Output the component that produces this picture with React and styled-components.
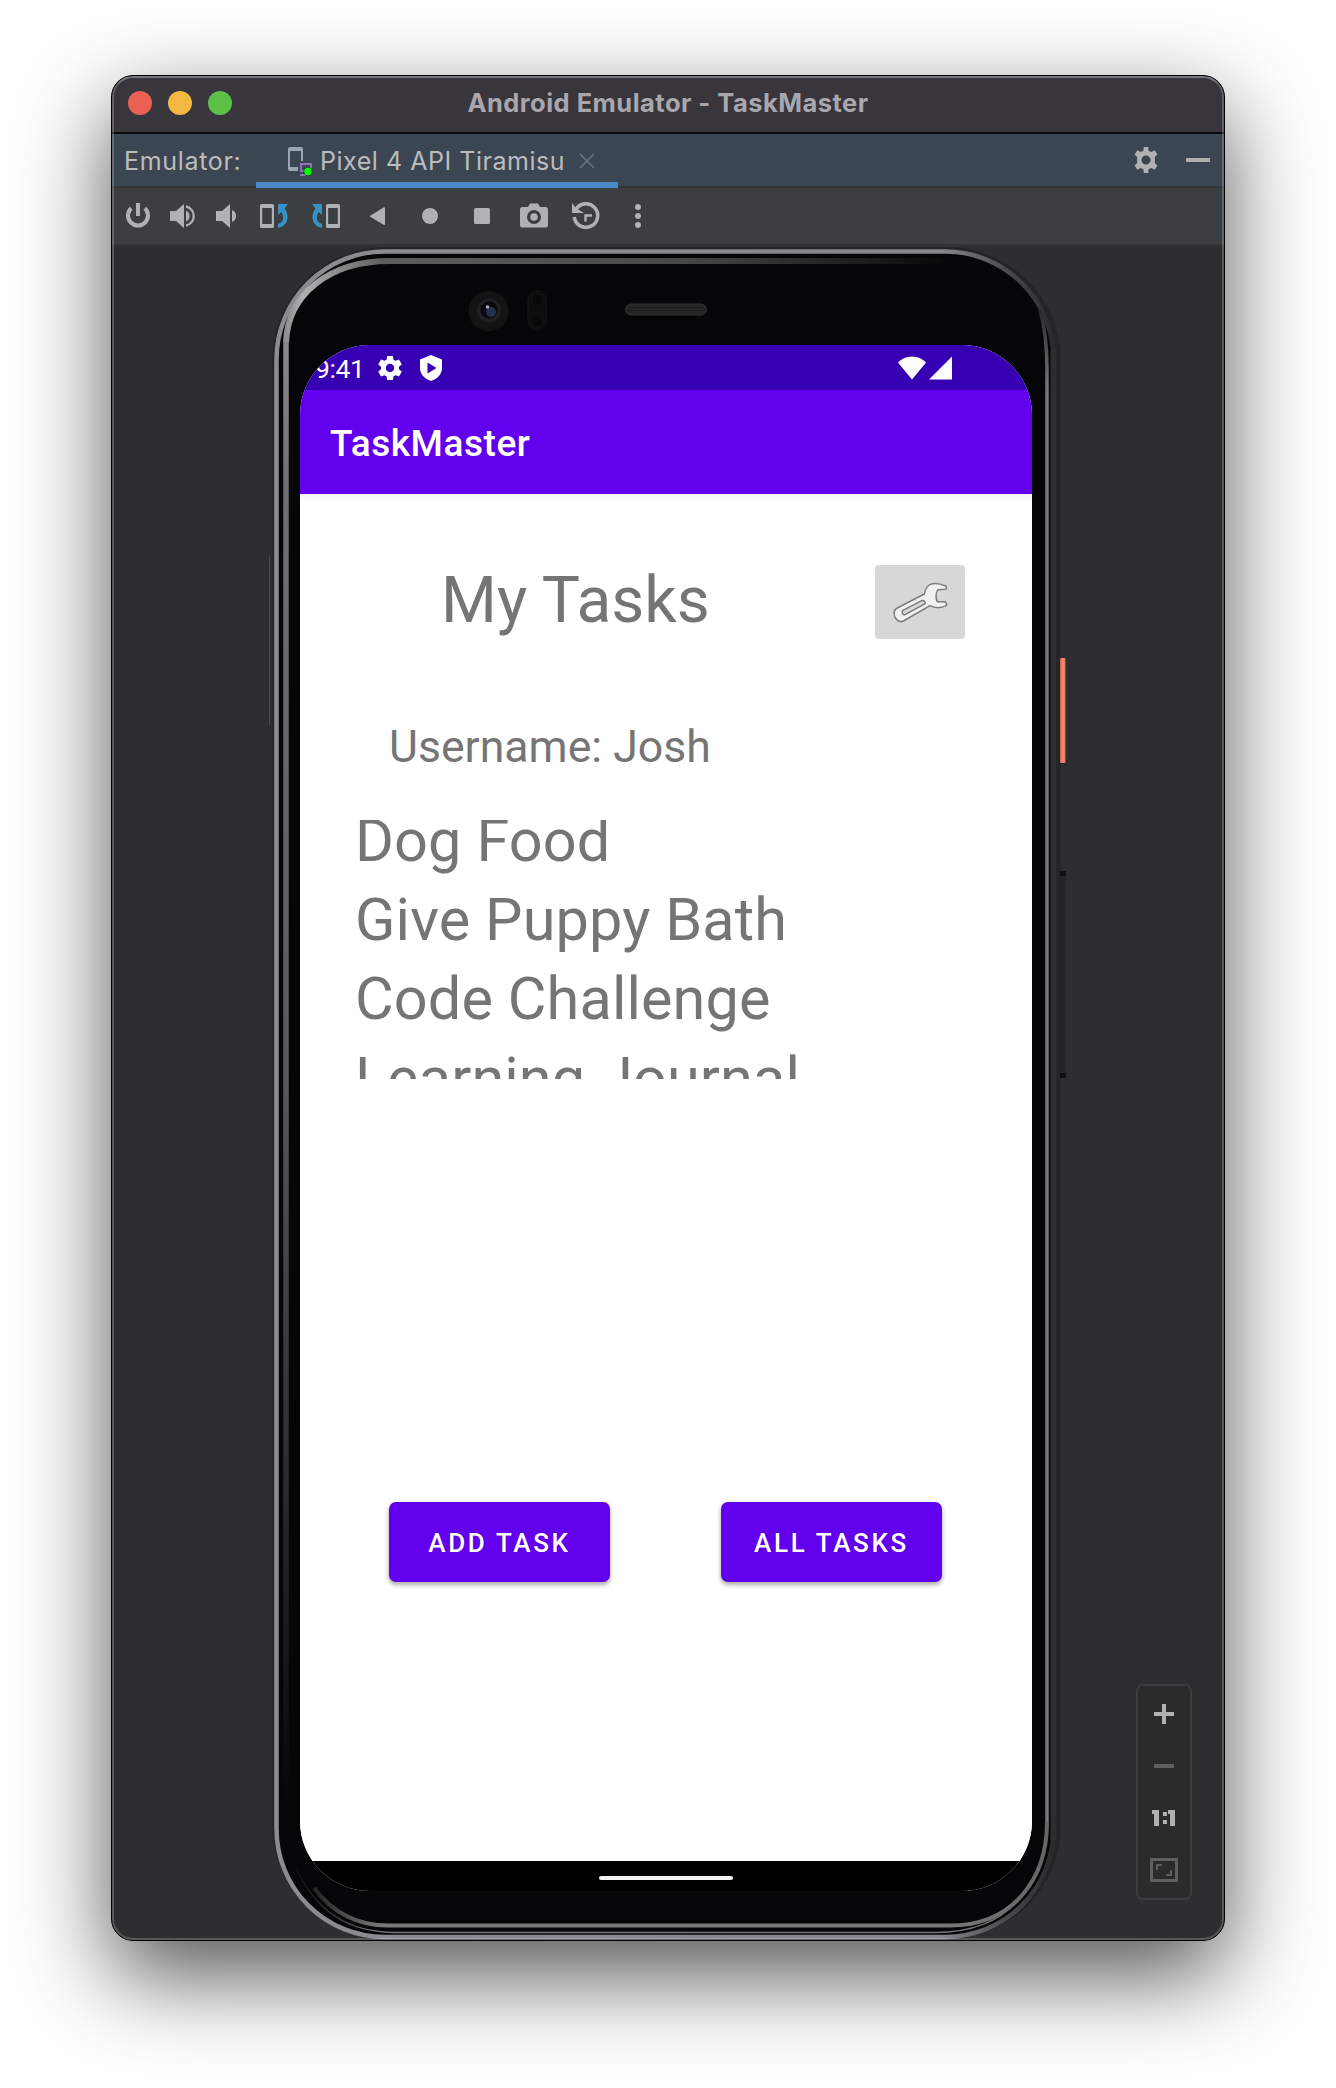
import React from "react";
import styled, { createGlobalStyle } from "styled-components";

const GlobalStyle = createGlobalStyle`
  *, *::before, *::after { box-sizing: border-box; }
  body { margin: 0; background: #fff; }
  button { font: inherit; border: 0; padding: 0; background: none; }
`;

const Desktop = styled.main`
  height: 2088px;
  padding: 75px 111px 0;
  overflow: hidden;
  background: #fff;
`;

const Window = styled.section`
  position: relative;
  display: flex;
  flex-direction: column;
  width: 1114px;
  height: 1866px;
  border: 1px solid #000;
  border-radius: 22px;
  overflow: hidden;
  background: #2d2e30;
  font-family: Inter, "Liberation Sans", sans-serif;
  &::after {
    content: "";
    position: absolute;
    inset: 0;
    border-radius: 21px;
    border: 2px solid rgba(255, 255, 255, 0.2);
    border-top-color: rgba(255, 255, 255, 0.32);
    pointer-events: none;
  }
`;

const WindowShadow = styled.div`
  width: 1114px;
  border-radius: 22px;
  box-shadow: 0 34px 92px rgba(0, 0, 0, 0.68);
`;

const TitleBar = styled.header`
  flex: none;
  display: grid;
  grid-template-columns: 1fr auto 1fr;
  align-items: center;
  height: 58px;
  padding: 0 16px 2px;
  background: #38363c;
  border-bottom: 2px solid #0c0c0e;
`;

const Lights = styled.div`
  display: flex;
  gap: 16px;
`;

const Light = styled.span`
  width: 24px;
  height: 24px;
  border-radius: 50%;
  background: ${(p) => p.$color};
`;

const Title = styled.h1`
  margin: 0;
  font-size: 25.5px;
  line-height: 32px;
  font-weight: 700;
  letter-spacing: 0.47px;
  color: #a9a7ad;
`;

const TabBar = styled.div`
  flex: none;
  display: flex;
  align-items: stretch;
  height: 54px;
  background: #3c4653;
  box-shadow: inset 0 -2px #353537;
  font-size: 25px;
  line-height: 54px;
  color: #bcbcbc;
`;

const TabLabel = styled.span`
  width: 144px;
  padding-left: 12px;
  letter-spacing: 0.68px;
`;

const Tab = styled.div`
  display: flex;
  align-items: center;
  width: 362px;
  padding-left: 30px;
  box-shadow: inset 0 -6px #4a88c7;
  svg { flex: none; }
`;

const TabName = styled.span`
  flex: none;
  margin-left: 8px;
  width: 259px;
  white-space: nowrap;
  letter-spacing: 0.53px;
`;

const TabActions = styled.div`
  display: flex;
  align-items: center;
  gap: 26px;
  margin-left: auto;
  padding: 0 13px 2px 0;
`;

const Toolbar = styled.div`
  flex: none;
  display: flex;
  height: 58px;
  padding-left: 3px;
  background: #3c3f41;
  border-bottom: 2px solid #343434;
`;

const ToolButton = styled.button`
  display: flex;
  align-items: center;
  justify-content: center;
  width: ${(p) => p.$width || 52}px;
`;

const Canvas = styled.div`
  flex: 1;
  display: flex;
  align-items: flex-end;
  justify-content: space-between;
  padding-right: 32px;
`;

const Device = styled.div`
  position: relative;
  align-self: stretch;
  width: 804px;
  margin-left: 150px;
  padding: 99px 0 0 38px;
`;

const Bezel = styled.svg`
  position: absolute;
  left: 0;
  top: 0;
`;

const Screen = styled.div`
  position: relative;
  display: flex;
  flex-direction: column;
  width: 732px;
  height: 1546px;
  border-radius: 70px;
  overflow: hidden;
  background: #fff;
  font-family: Roboto, sans-serif;
`;

const StatusBar = styled.div`
  flex: none;
  display: flex;
  align-items: center;
  height: 45px;
  padding: 0 80px 0 15px;
  background: #3700b3;
  color: #fff;
  font-size: 26.5px;
`;

const Clock = styled.span`
  width: 63px;
  padding-top: 2px;
  letter-spacing: -0.4px;
`;

const StatusIcons = styled.div`
  display: flex;
  align-items: center;
  gap: ${(p) => p.$gap}px;
  margin-left: ${(p) => p.$push || 0};
`;

const AppBar = styled.div`
  flex: none;
  display: flex;
  align-items: center;
  height: 104px;
  padding: 3px 0 0 30px;
  background: #6200ee;
  color: #fff;
  font-size: 37px;
  font-weight: 500;
  letter-spacing: 0.55px;
`;

const Content = styled.div`
  flex: 1;
  display: flex;
  flex-direction: column;
  padding: 71px 0 0;
  color: #757575;
  background: linear-gradient(#f4f4f4, #fff 8px);
`;

const Heading = styled.div`
  display: flex;
  justify-content: space-between;
  height: 74px;
  padding: 0 67px 0 141px;
`;

const PageTitle = styled.h2`
  margin: -2px 0 0;
  font-size: 64px;
  line-height: 75px;
  font-weight: 400;
`;

const SettingsButton = styled.button`
  width: 90px;
  height: 74px;
  border-radius: 4px;
  background: #d6d7d6;
  svg { display: block; }
`;

const Username = styled.p`
  margin: 82px 0 0 89px;
  font-size: 44.6px;
  line-height: 52px;
`;

const TaskList = styled.ul`
  display: flex;
  flex-direction: column;
  height: 259px;
  margin: 47px 0 0;
  padding: 0 0 0 55px;
  overflow: hidden;
  list-style: none;
`;

const Task = styled.li`
  flex: none;
  height: 79.4px;
  font-size: 59.4px;
  line-height: 79.4px;
  letter-spacing: 0.12px;
  white-space: nowrap;
  &:first-child { margin-top: -18.4px; }
`;

const Actions = styled.div`
  display: flex;
  justify-content: space-between;
  margin-top: 423px;
  padding: 0 90px 0 89px;
`;

const ActionButton = styled.button`
  width: 221px;
  height: 80px;
  padding-top: 2px;
  border-radius: 7px;
  background: #6200ee;
  color: #fff;
  font-size: 26px;
  font-weight: 500;
  letter-spacing: 2.65px;
  box-shadow: 0 3px 4px rgba(0, 0, 0, 0.28), 0 1px 6px rgba(0, 0, 0, 0.1);
`;

const NavBar = styled.div`
  flex: none;
  display: flex;
  justify-content: center;
  align-items: center;
  height: 30px;
  background: #000;
`;

const Handle = styled.span`
  width: 134px;
  height: 4px;
  margin-top: 3px;
  border-radius: 2px;
  background: #f2f2f2;
`;

const ZoomPanel = styled.div`
  display: flex;
  flex-direction: column;
  align-items: center;
  width: 56px;
  height: 216px;
  margin-bottom: 40px;
  padding-top: 2px;
  border: 2px solid #3d3d3f;
  border-radius: 7px;
  background: #2b2b2b;
`;

const ZoomButton = styled.button`
  display: flex;
  align-items: center;
  justify-content: center;
  width: 52px;
  height: 52px;
`;

const GEAR =
  "M19.43 12.98c.04-.32.07-.64.07-.98s-.03-.66-.07-.98l2.11-1.65c.19-.15.24-.42.12-.64l-2-3.46c-.12-.22-.39-.3-.61-.22l-2.49 1c-.52-.4-1.08-.73-1.69-.98l-.38-2.65C14.46 2.18 14.25 2 14 2h-4c-.25 0-.46.18-.49.42l-.38 2.65c-.61.25-1.17.59-1.69.98l-2.49-1c-.23-.09-.49 0-.61.22l-2 3.46c-.13.22-.07.49.12.64l2.11 1.65c-.04.32-.07.65-.07.98s.03.66.07.98l-2.11 1.65c-.19.15-.24.42-.12.64l2 3.46c.12.22.39.3.61.22l2.49-1c.52.4 1.08.73 1.69.98l.38 2.65c.03.24.24.42.49.42h4c.25 0 .46-.18.49-.42l.38-2.65c.61-.25 1.17-.59 1.69-.98l2.49 1c.23.09.49 0 .61-.22l2-3.46c.12-.22.07-.49-.12-.64l-2.11-1.65zM12 15.5c-1.93 0-3.5-1.57-3.5-3.5s1.57-3.5 3.5-3.5 3.5 1.57 3.5 3.5-1.57 3.5-3.5 3.5z";

const Icon = ({ w, h, children, ...rest }) => (
  <svg width={w} height={h} viewBox={`0 0 ${w} ${h}`} fill="#afb1b3" {...rest}>
    {children}
  </svg>
);

const Gear = ({ size, color }) => (
  <svg width={size} height={size} viewBox="2 2 20 20" fill={color}>
    <path d={GEAR} />
  </svg>
);

const TabGear = () => (
  <Icon w={26} h={26}>
    <path
      fillRule="evenodd"
      d="M10.6 0h4.8v3.6l2.8 1.4 3.5-1.7 2.7 4.2-2.5 2.3v6.4l2.5 2.3-2.7 4.2-3.5-1.7-2.8 1.4V26h-4.8v-3.6L7.8 21l-3.5 1.7-2.7-4.2 2.5-2.3V9.800L1.600 7.500l2.700-4.200L7.800 5l2.800-1.400zM13 8.500a4.500 4.500 0 1 0 0 9 4.500 4.500 0 0 0 0-9z"
    />
  </Icon>
);

const DeviceIcon = () => (
  <svg width="26" height="30" viewBox="0 0 26 30">
    <path d="M4 1h11a2 2 0 0 1 2 2v12h-2V5H4v16h8v4H4a2 2 0 0 1-2-2V3a2 2 0 0 1 2-2z" fill="#9aa7b0" />
    <path d="M14 17h12v9H14zM16 19v5h8v-5zM14 28h6v2h-6z" fill="#8f74b5" fillRule="evenodd" />
    <circle cx="22" cy="25.500" r="4.600" fill="#24432f" />
    <circle cx="22" cy="25.500" r="3.700" fill="#0f0" />
  </svg>
);

const Power = () => (
  <Icon w={26} h={26}>
    <path d="M6.200 5.200A10 10 0 1 0 19.800 5.200" fill="none" stroke="#afb1b3" strokeWidth="4" />
    <rect x="11" y="0" width="4" height="13" />
  </Icon>
);

const VolumeUp = () => (
  <Icon w={27} h={24}>
    <path d="M0 7h6l8-7v24l-8-7H0zM16 6.500a6 6 0 0 1 0 11z" />
    <path d="M16 2.500a9.700 9.700 0 0 1 0 19" fill="none" stroke="#afb1b3" strokeWidth="2.300" />
  </Icon>
);

const VolumeDown = () => (
  <Icon w={21} h={24}>
    <path d="M0 7h6l8-7v24l-8-7H0zM16 6a6.500 6.500 0 0 1 0 12z" />
  </Icon>
);

const Rotate = ({ flip }) => (
  <Icon w={28} h={26}>
    <g transform={flip ? "translate(28 0) scale(-1 1)" : undefined}>
      <path
        fillRule="evenodd"
        d="M1.500 1h11A1.500 1.500 0 0 1 14 2.500v21a1.500 1.500 0 0 1-1.500 1.500h-11A1.500 1.500 0 0 1 0 23.500v-21A1.500 1.500 0 0 1 1.500 1zM2.200 5v16h9.600V5z"
      />
      <path d="M18 1h10l-3.500 4.500c5 6 4.500 17.500-6.500 19.500v-4c6-1.500 6.500-8 3.200-12L18 12z" fill="#3592c4" />
    </g>
  </Icon>
);

const Camera = () => (
  <Icon w={28} h={26}>
    <path
      fillRule="evenodd"
      d="M2.500 4H8l2-3.500h8L20 4h5.500A2.500 2.500 0 0 1 28 6.500V22a2.500 2.500 0 0 1-2.500 2.500h-23A2.500 2.500 0 0 1 0 22V6.500A2.500 2.500 0 0 1 2.500 4zM14 7a7 7 0 1 0 0 14 7 7 0 0 0 0-14z"
    />
    <circle cx="14" cy="14" r="3.800" />
  </Icon>
);

const Restore = () => (
  <Icon w={30} h={30}>
    <path d="M4.500 9A11.800 11.800 0 1 1 3.200 16" fill="none" stroke="#afb1b3" strokeWidth="3.600" />
    <path d="M1 2l3.800 5L13 12H1z" />
    <path d="M14.500 20.500v-6H21" fill="none" stroke="#afb1b3" strokeWidth="2.400" />
  </Icon>
);

const Wrench = () => (
  <svg width="90" height="74" viewBox="0 0 270 222" stroke="#7c7c7c" strokeWidth="4.500" strokeLinejoin="round">
    <path
      fill="#f1f1f1"
      d="M213 63q4 8-2 10l-22 1q-11 16-2 36l23 0q7 6 4 12q-26 12-49 0L85 168q-17 6-26-14q-6-18 8-25l81-42q8-47 64-24z"
    />
    <path fill="#d6d7d6" d="M82 137l60-31q8 1 9 10l-61 33q-10 1-8-12z" />
  </svg>
);

const DeviceFrame = () => (
  <Bezel width="804" height="1694" viewBox="262 246 804 1694" fill="none">
    <defs>
      <linearGradient id="rim" x1="274" x2="1060" y1="0" y2="0" gradientUnits="userSpaceOnUse">
        <stop offset="0" stopColor="#8a8c90" />
        <stop offset="0.85" stopColor="#85868a" />
        <stop offset="0.93" stopColor="#4a4b4e" />
        <stop offset="0.99" stopColor="#2a2b2d" />
      </linearGradient>
      <linearGradient id="glintTop" x1="283" x2="950" y1="0" y2="0" gradientUnits="userSpaceOnUse">
        <stop offset="0" stopColor="#8a8a8a" />
        <stop offset="0.03" stopColor="#b0b0b0" />
        <stop offset="0.15" stopColor="#5d5d5d" />
        <stop offset="0.6" stopColor="#484848" />
        <stop offset="1" stopColor="#070707" />
      </linearGradient>
      <linearGradient id="glintLeft" x1="0" x2="0" y1="340" y2="1800" gradientUnits="userSpaceOnUse">
        <stop offset="0" stopColor="#8a8a8a" />
        <stop offset="0.1" stopColor="#707070" />
        <stop offset="0.5" stopColor="#5a5a5a" />
        <stop offset="1" stopColor="#070707" />
      </linearGradient>
      <linearGradient id="glintRight" x1="0" x2="0" y1="290" y2="1900" gradientUnits="userSpaceOnUse">
        <stop offset="0" stopColor="#151515" />
        <stop offset="0.06" stopColor="#777" />
        <stop offset="1" stopColor="#777" />
      </linearGradient>
      <linearGradient id="chin" x1="290" x2="1045" y1="0" y2="0" gradientUnits="userSpaceOnUse">
        <stop offset="0" stopColor="#070707" />
        <stop offset="0.12" stopColor="#777" />
        <stop offset="0.88" stopColor="#777" />
        <stop offset="1" stopColor="#666" />
      </linearGradient>
      <linearGradient id="power" x1="1060" x2="1066" y1="0" y2="0" gradientUnits="userSpaceOnUse">
        <stop offset="0" stopColor="#d9604a" />
        <stop offset="0.5" stopColor="#ef8d78" />
        <stop offset="1" stopColor="#e2664b" />
      </linearGradient>
    </defs>
    <path d="M269.500 556V725M272.500 562V719" stroke="#4c4d4f" />
    <rect x="272" y="247" width="789" height="1692" rx="114" fill="#242527" />
    <rect x="276.500" y="251.500" width="777" height="1685.500" rx="108" fill="#060608" stroke="url(#rim)" strokeWidth="4.500" />
    <path d="M286 341V1830" stroke="url(#glintLeft)" strokeWidth="5.500" />
    <path d="M286 342C288 295 328 261 390 261H945" stroke="url(#glintTop)" strokeWidth="6" />
    <path d="M1040 310Q1047 335 1047 370V1822" stroke="url(#glintRight)" strokeWidth="3.500" />
    <path d="M1053.500 350V1840" stroke="#2c2d2f" strokeWidth="6" />
    <path d="M296 1868C316 1912 350 1932.500 395 1932.500H935C985 1932.500 1018 1912 1036 1874" stroke="url(#chin)" strokeWidth="1.300" />
    <path d="M314 1888C332 1912 356 1925.500 388 1925.500H950C1012 1925.500 1047 1880 1047 1822" stroke="url(#chin)" strokeWidth="4" />
    <circle cx="488.500" cy="311" r="20" fill="#131313" />
    <circle cx="489" cy="310.500" r="12" fill="#1f2023" />
    <circle cx="489" cy="310" r="8.500" fill="#08080b" />
    <circle cx="491" cy="312" r="5" fill="#26304f" />
    <circle cx="487.500" cy="307" r="1.800" fill="#a7adba" />
    <rect x="528" y="291" width="18" height="39" rx="9" fill="#0d0d0d" stroke="#161616" />
    <circle cx="537" cy="300" r="6" fill="#080808" stroke="#151515" />
    <circle cx="537" cy="321" r="6" fill="#080808" stroke="#151515" />
    <rect x="625.500" y="304" width="81" height="11" rx="5.500" fill="#262626" stroke="#303030" />
    <path d="M629 307.500H704M629 310.500H704" stroke="#111" strokeDasharray="1 1.500" />
    <rect x="1060" y="658" width="5.500" height="105" rx="1" fill="url(#power)" />
    <rect x="1060" y="871" width="6" height="207" rx="1" fill="#242526" />
    <path d="M1060 871h6v5h-6zM1060 1073h6v5h-6z" fill="#0f0f0f" />
  </Bezel>
);

const TASKS = ["Dog Food", "Give Puppy Bath", "Code Challenge", "Learning Journal"];

export default function App() {
  return (
    <Desktop>
      <GlobalStyle />
      <WindowShadow>
        <Window>
          <TitleBar>
            <Lights>
              <Light $color="#ea6154" />
              <Light $color="#f3b841" />
              <Light $color="#5cbf46" />
            </Lights>
            <Title>Android Emulator - TaskMaster</Title>
          </TitleBar>
          <TabBar>
            <TabLabel>Emulator:</TabLabel>
            <Tab>
              <DeviceIcon />
              <TabName>Pixel 4 API Tiramisu</TabName>
              <Icon w={16} h={16}>
                <path d="M1 1l14 14M15 1L1 15" stroke="#6a747d" strokeWidth="1.600" />
              </Icon>
            </Tab>
            <TabActions>
              <TabGear />
              <Icon w={26} h={26}>
                <rect x="1" y="11" width="24" height="4" />
              </Icon>
            </TabActions>
          </TabBar>
          <Toolbar>
            <ToolButton $width={46}><Power /></ToolButton>
            <ToolButton $width={44}><VolumeUp /></ToolButton>
            <ToolButton $width={42}><VolumeDown /></ToolButton>
            <ToolButton $width={53}><Rotate /></ToolButton>
            <ToolButton><Rotate flip /></ToolButton>
            <ToolButton>
              <Icon w={16} h={18}><path d="M15 1v16.500a.8.800 0 0 1-1 .5L1 10.200a1 1 0 0 1 0-2L14 .2a.8.800 0 0 1 1 .8z" /></Icon>
            </ToolButton>
            <ToolButton>
              <Icon w={16} h={16}><circle cx="8" cy="8" r="8" /></Icon>
            </ToolButton>
            <ToolButton>
              <Icon w={16} h={16}><rect width="16" height="16" rx="1.500" /></Icon>
            </ToolButton>
            <ToolButton><Camera /></ToolButton>
            <ToolButton><Restore /></ToolButton>
            <ToolButton>
              <Icon w={6} h={24}>
                <circle cx="3" cy="3" r="3" />
                <circle cx="3" cy="12" r="3" />
                <circle cx="3" cy="21" r="3" />
              </Icon>
            </ToolButton>
          </Toolbar>
          <Canvas>
            <Device>
              <DeviceFrame />
              <Screen>
                <StatusBar>
                  <Clock>9:41</Clock>
                  <StatusIcons $gap={18}>
                    <Gear size={24} color="#fff" />
                    <svg width="22" height="26" viewBox="0 0 22 26">
                      <path d="M11 0l11 4.500V13c0 6-4.500 11-11 13C4.500 24 0 19 0 13V4.500z" fill="#fff" />
                      <path d="M7.500 7.500v11l9-5.500z" fill="#3700b3" />
                    </svg>
                  </StatusIcons>
                  <StatusIcons $gap={3} $push="auto">
                    <svg width="28" height="24" viewBox="0 0 28 24">
                      <path d="M14 23.500L0 6.500Q5.500.5 14 .5T28 6.500z" fill="#fff" />
                    </svg>
                    <svg width="23" height="24" viewBox="0 0 23 24">
                      <path d="M23 .5v23H0z" fill="#fff" />
                    </svg>
                  </StatusIcons>
                </StatusBar>
                <AppBar>TaskMaster</AppBar>
                <Content>
                  <Heading>
                    <PageTitle>My Tasks</PageTitle>
                    <SettingsButton aria-label="Settings"><Wrench /></SettingsButton>
                  </Heading>
                  <Username>Username: Josh</Username>
                  <TaskList>
                    {TASKS.map((task) => (
                      <Task key={task}>{task}</Task>
                    ))}
                  </TaskList>
                  <Actions>
                    <ActionButton>ADD TASK</ActionButton>
                    <ActionButton>ALL TASKS</ActionButton>
                  </Actions>
                </Content>
                <NavBar><Handle /></NavBar>
              </Screen>
            </Device>
            <ZoomPanel>
              <ZoomButton>
                <Icon w={20} h={20}><path d="M8 0h4v8h8v4h-8v8H8v-8H0V8h8z" /></Icon>
              </ZoomButton>
              <ZoomButton>
                <Icon w={20} h={4} fill="#5e5f60"><rect width="20" height="4" /></Icon>
              </ZoomButton>
              <ZoomButton>
                <Icon w={24} h={16} aria-label="Actual size">
                  <rect x="2" width="5" height="16" />
                  <rect x="0" width="4" height="4" />
                  <rect x="11" y="2" width="4" height="4" />
                  <rect x="11" y="10" width="4" height="4" />
                  <rect x="18" width="5" height="16" />
                  <rect x="16" width="4" height="4" />
                </Icon>
              </ZoomButton>
              <ZoomButton>
                <svg width="28" height="24" viewBox="0 0 28 24" fill="none" stroke="#5e5f60">
                  <rect x="1.500" y="1.500" width="25" height="21" strokeWidth="3" />
                  <path d="M7 12V7h5M16 17h5v-5" strokeWidth="2" />
                </svg>
              </ZoomButton>
            </ZoomPanel>
          </Canvas>
        </Window>
      </WindowShadow>
    </Desktop>
  );
}
